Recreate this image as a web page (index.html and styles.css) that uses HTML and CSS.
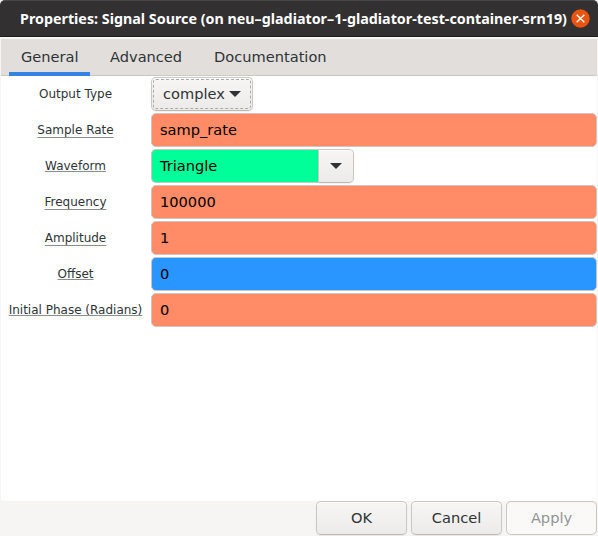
FILE: index.html
```html
<!DOCTYPE html>
<html lang="en">
<head>
<meta charset="utf-8">
<title>Properties: Signal Source</title>
<link rel="stylesheet" href="styles.css">
</head>
<body>
<div class="window">
  <header class="titlebar">
    <h1 class="title">Properties: Signal Source (on neu–gladiator–1-gladiator-test-container-srn19)</h1>
    <button class="close" aria-label="Close"><svg width="19" height="19" viewBox="0 0 19 19"><circle cx="9.5" cy="9.5" r="9.2" fill="#e95410"/><path d="M5.7 5.7l7.6 7.6M13.3 5.7l-7.6 7.6" stroke="#fff" stroke-width="1.4"/></svg></button>
  </header>
  <main class="notebook">
    <nav class="tabs">
      <span class="tab active">General</span>
      <span class="tab">Advanced</span>
      <span class="tab">Documentation</span>
    </nav>
    <div class="params">
      <div class="label"><span>Output Type</span></div>
      <button class="btn type"><span>complex</span><svg width="12" height="6" viewBox="0 0 12 6"><path d="M0 0h12l-6 6z" fill="#2e3436"/></svg></button>
      <div class="label low"><span>Sample Rate</span></div>
      <div class="entry">samp_rate</div>
      <div class="label linked"><span>Waveform</span></div>
      <div class="combo"><div class="entry green">Triangle</div><button class="btn drop" aria-label="Open"><svg width="12" height="6" viewBox="0 0 12 6"><path d="M0 0h12l-6 6z" fill="#2e3436"/></svg></button></div>
      <div class="label low"><span>Frequency</span></div>
      <div class="entry">100000</div>
      <div class="label low"><span>Amplitude</span></div>
      <div class="entry">1</div>
      <div class="label linked"><span>Offset</span></div>
      <div class="entry blue">0</div>
      <div class="label linked"><span>Initial Phase (Radians)</span></div>
      <div class="entry">0</div>
    </div>
  </main>
  <footer class="actions">
    <button class="btn">OK</button>
    <button class="btn">Cancel</button>
    <button class="btn" disabled>Apply</button>
  </footer>
</div>
</body>
</html>
```
FILE: styles.css
```css
* { box-sizing: border-box; }
body { margin: 0; background: #f6f5f3; color: #2e3436; font: 14.6px/18px "DejaVu Sans", sans-serif; }
.window { width: 598px; height: 536px; display: flex; flex-direction: column; overflow: hidden; }
.titlebar {
  height: 37px; flex: none; display: flex; align-items: center; padding: 0 8px 0 20px;
  background: #333031; border-top: 1px solid #4a4848; border-bottom: 1px solid #1e1c1c;
  border-radius: 5px 5px 0 0;
}
.title { margin: 0; width: 551px; flex: none; font: 700 14.3px/20px "Noto Sans", sans-serif; color: #fff; white-space: nowrap; }
.close { width: 19px; height: 19px; padding: 0; border: 0; background: none; display: flex; }
.notebook { height: 464px; flex: none; margin: 0 1px; padding-top: 2px; display: flex; flex-direction: column; }
.tabs { height: 37px; flex: none; display: flex; padding-left: 8px; background: #e1dedb; border-bottom: 1px solid #cdc7c2; }
.tab { height: 37px; padding: 9px 12px 0; margin-right: 8px; }
.active { width: 81px; border-bottom: 4px solid #3584e4; }
.params {
  flex: 1; background: #fff; display: grid; grid-template-columns: 133px 446px;
  grid-auto-rows: 34px; row-gap: 2px; column-gap: 9px; padding: 1px 0 0 8px; align-content: start;
}
.label { display: flex; align-items: center; justify-content: center; font-size: 12px; line-height: 16px; white-space: nowrap; }
.low span, .linked span { text-decoration: underline 1px #8b8e8f; text-decoration-skip-ink: none; text-underline-offset: 1px; }
.low span { text-underline-offset: 3px; }
.entry { height: 34px; padding: 7px 8px; border: 1px solid #cdc7c2; border-radius: 5px; background: #ff8c66; color: #000; }
.green { background: #00ff99; width: 167px; border-right: 0; border-radius: 5px 0 0 5px; }
.blue { background: #2995ff; }
.btn {
  height: 34px; padding: 0; display: flex; align-items: center; justify-content: center;
  font: inherit; color: #2e3436; border: 1px solid #cdc7c2; border-bottom-color: #bfb8b1; border-radius: 5px;
  background: linear-gradient(#f7f6f5, #edebe9); box-shadow: inset 0 1px #fff, 0 1px 2px #00000012;
}
.type { width: 102px; gap: 4px; outline: 1px dashed #aaa; outline-offset: -3px; }
.combo { display: flex; }
.drop { width: 36px; border-radius: 0 5px 5px 0; }
.actions { display: flex; justify-content: flex-end; gap: 4px; padding-right: 1px; }
.actions .btn { width: 91px; }
.actions .btn:disabled { background: #faf9f8; color: #929595; box-shadow: none; border-color: #cdc7c2; }
```
